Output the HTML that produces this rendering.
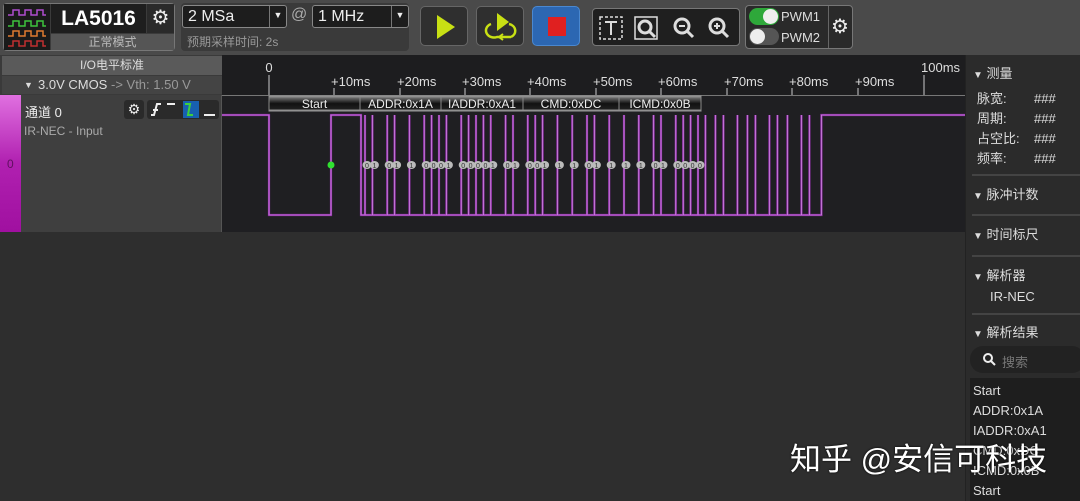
<!DOCTYPE html>
<html><head><meta charset="utf-8"><style>
*{margin:0;padding:0;box-sizing:border-box}
body{width:1080px;height:501px;overflow:hidden;background:#2e2e2e;font-family:"Liberation Sans","Noto Sans CJK SC",sans-serif;position:relative;color:#ddd}
.a{position:absolute}
.tb{left:0;top:0;width:1080px;height:55px;background:#4a4a4a}
.box{border:1px solid #777;border-radius:4px;background:#2c2c2c}
.sel{background:#1d1d1d;border:1px solid #888;border-radius:3px;color:#eee;font-size:16px;padding:1px 5px}
.btn{border:1px solid #666;border-radius:5px;background:#2f2f2f}
.rp{font-size:13px;color:#ddd}
.hd{font-size:13px;color:#ddd}
.sep{height:2px;background:#444}
</style></head><body>
<div class="a tb"></div>
<div class="a box" style="left:3px;top:3px;width:172px;height:48px;background:#3b3b3b"></div>
<div class="a" style="left:4px;top:4px;width:46px;height:46px;background:#1a1a1a">
<svg width="46" height="46"><g fill="none" stroke-width="1.5">
<path d="M4 11h5v-5h6v5h6v-5h6v5h6v-5h6v5h3" stroke="#b04cd0"/>
<path d="M4 22h5v-5h6v5h6v-5h6v5h6v-5h6v5h3" stroke="#3cc43c"/>
<path d="M4 32h5v-5h6v5h6v-5h6v5h6v-5h6v5h3" stroke="#e07a30"/>
<path d="M4 42h5v-5h6v5h6v-5h6v5h6v-5h6v5h3" stroke="#c03030"/></g></svg></div>
<div class="a" style="left:51px;top:4px;width:95px;height:29px;background:#1e1e1e;color:#fff;font-weight:bold;font-size:21px;text-align:center;line-height:29px">LA5016</div>
<div class="a" style="left:147px;top:4px;width:27px;height:29px;background:#2a2a2a;color:#eee;font-size:20px;text-align:center;line-height:29px">⚙</div>
<div class="a" style="left:51px;top:34px;width:123px;height:16px;background:#555;color:#bbb;font-size:12px;text-align:center;line-height:16px">正常模式</div>
<div class="a" style="left:181px;top:3px;width:228px;height:48px;background:#3a3a3a;border-radius:4px"></div>
<div class="a sel" style="left:182px;top:5px;width:105px;height:23px;line-height:19px">2 MSa<span style="position:absolute;right:0;top:0;width:17px;height:21px;border-left:1px solid #777;font-size:9px;text-align:center">▼</span></div>
<div class="a" style="left:291px;top:6px;color:#aaa;font-size:16px">@</div>
<div class="a sel" style="left:312px;top:5px;width:97px;height:23px;line-height:19px">1 MHz<span style="position:absolute;right:0;top:0;width:17px;height:21px;border-left:1px solid #777;font-size:9px;text-align:center">▼</span></div>
<div class="a" style="left:187px;top:33px;color:#999;font-size:12px">预期采样时间: 2s</div>
<div class="a btn" style="left:420px;top:6px;width:48px;height:40px"><svg width="48" height="40"><path d="M16 8L34 20L16 32Z" fill="#c8e014"/></svg></div>
<div class="a btn" style="left:476px;top:6px;width:48px;height:40px"><svg width="48" height="40"><path d="M20 6L32 15L20 24Z" fill="#c8e014"/><path d="M14 17a8 7 0 0 0 6 13h14M34 30a8 7 0 0 0-2-13" fill="none" stroke="#c8e014" stroke-width="2.5"/><path d="M26 27l-4 3 4 3" fill="none" stroke="#c8e014" stroke-width="2"/></svg></div>
<div class="a" style="left:532px;top:6px;width:48px;height:40px;background:#2c67b2;border:1px solid #4a88d0;border-radius:5px"><svg width="48" height="40"><rect x="15" y="10" width="18" height="19" fill="#e02020"/></svg></div>
<div class="a" style="left:592px;top:8px;width:148px;height:38px;background:#1f1f1f;border:1px solid #777;border-radius:4px">
<svg width="148" height="38"><g fill="none" stroke="#ddd" stroke-width="2">
<rect x="7" y="8" width="22" height="22" stroke-dasharray="3 2" stroke-width="1.5"/><path d="M12 13h12M18 13v13"/>
<rect x="42" y="8" width="22" height="22" stroke-width="1.5"/><circle cx="52" cy="18" r="6" stroke-width="3"/><path d="M56 22l6 6" stroke-width="3"/>
<circle cx="89" cy="17" r="7" stroke-width="3"/><path d="M94 22l6 6" stroke-width="3"/><path d="M86 17h6"/>
<circle cx="124" cy="17" r="7" stroke-width="3"/><path d="M129 22l6 6" stroke-width="3"/><path d="M121 17h6M124 14v6"/></g></svg></div>
<div class="a" style="left:745px;top:5px;width:108px;height:44px;background:#2a2a2a;border:1px solid #777;border-radius:4px"></div>
<div class="a" style="left:749px;top:8px;width:30px;height:17px;border-radius:9px;background:#2ea83a"></div>
<div class="a" style="left:763px;top:9px;width:15px;height:15px;border-radius:50%;background:#eee"></div>
<div class="a" style="left:749px;top:28px;width:30px;height:17px;border-radius:9px;background:#555"></div>
<div class="a" style="left:750px;top:29px;width:15px;height:15px;border-radius:50%;background:#eee"></div>
<div class="a" style="left:781px;top:9px;font-size:13px;color:#ddd">PWM1</div>
<div class="a" style="left:781px;top:30px;font-size:13px;color:#ddd">PWM2</div>
<div class="a" style="left:828px;top:6px;width:1px;height:42px;background:#666"></div>
<div class="a" style="left:831px;top:14px;color:#eee;font-size:20px">⚙</div>
<div class="a" style="left:0;top:55px;width:222px;height:40px;background:#3a3a3a"></div>
<div class="a" style="left:2px;top:56px;width:220px;height:19px;background:#5a5a5a;color:#ddd;font-size:12px;text-align:center;line-height:19px">I/O电平标准</div>
<div class="a" style="left:2px;top:76px;width:220px;height:18px;background:#444;font-size:13px;line-height:18px;padding-left:22px;color:#ddd"><span style="font-size:9px;position:absolute;left:22px">▼</span><span style="margin-left:14px">3.0V CMOS</span> <span style="color:#999">-&gt; Vth: 1.50 V</span></div>
<div class="a" style="left:222px;top:55px;width:743px;height:40px;background:#1d1d1f"></div>
<div class="a" style="left:222px;top:95px;width:743px;height:137px;background:#1f1f22"></div>
<svg class="a" style="left:0;top:0" width="1080" height="240" id="wv"></svg>
<div class="a" style="left:0;top:95px;width:222px;height:137px;background:#3f3f3f;border-right:1px solid #555"></div>
<div class="a" style="left:0;top:95px;width:21px;height:137px;background:linear-gradient(#e070e0,#b020b0 50%,#a010a0)"></div>
<div class="a" style="left:7px;top:157px;color:#601060;font-size:12px">0</div>
<div class="a" style="left:25px;top:102px;font-size:13px;color:#eee">通道 0</div>
<div class="a" style="left:24px;top:124px;font-size:12px;color:#aaa">IR-NEC - Input</div>
<div class="a" style="left:124px;top:100px;width:20px;height:19px;background:#2a2a2a;border-radius:3px;color:#eee;font-size:14px;text-align:center;line-height:19px">⚙</div>
<div class="a" style="left:147px;top:100px;width:72px;height:19px;background:#2a2a2a;border-radius:3px"><svg width="72" height="19"><g fill="none" stroke="#eee" stroke-width="2"><path d="M4 15h3l3-11h4M6 10h5"/><path d="M20 4h8"/><rect x="36" y="1" width="16" height="17" fill="#1860b0" stroke="none"/><path d="M38 4h5l-2 11h5" stroke="#3ed03e"/><path d="M57 15h11"/></g></svg></div>
<div class="a" style="left:965px;top:55px;width:115px;height:446px;background:#2b2b2b;border-left:1px solid #222"></div>
<div class="a hd" style="left:973px;top:63px"><span style="font-size:10px">▼</span> 测量</div>
<div class="a rp" style="left:977px;top:89px;line-height:20px">脉宽:<br>周期:<br>占空比:<br>频率:</div>
<div class="a rp" style="left:1034px;top:89px;line-height:20px">###<br>###<br>###<br>###</div>
<div class="a sep" style="left:972px;top:174px;width:108px"></div>
<div class="a hd" style="left:973px;top:184px"><span style="font-size:10px">▼</span> 脉冲计数</div>
<div class="a sep" style="left:972px;top:214px;width:108px"></div>
<div class="a hd" style="left:973px;top:224px"><span style="font-size:10px">▼</span> 时间标尺</div>
<div class="a sep" style="left:972px;top:255px;width:108px"></div>
<div class="a hd" style="left:973px;top:265px"><span style="font-size:10px">▼</span> 解析器</div>
<div class="a rp" style="left:990px;top:289px">IR-NEC</div>
<div class="a sep" style="left:972px;top:313px;width:108px"></div>
<div class="a hd" style="left:973px;top:322px"><span style="font-size:10px">▼</span> 解析结果</div>
<div class="a" style="left:970px;top:346px;width:115px;height:27px;border-radius:13px;background:#222"></div>
<svg class="a" style="left:982px;top:352px" width="14" height="14"><circle cx="6" cy="6" r="4" fill="none" stroke="#eee" stroke-width="2"/><path d="M9 9l4 4" stroke="#eee" stroke-width="2"/></svg>
<div class="a" style="left:1002px;top:352px;font-size:13px;color:#777">搜索</div>
<div class="a" style="left:970px;top:378px;width:110px;height:123px;background:#1e1e1e"></div>
<div class="a" style="left:973px;top:381px;font-size:13px;line-height:20px;color:#ddd">Start<br>ADDR:0x1A<br>IADDR:0xA1<br>CMD:0xDC<br>ICMD:0x0B<br>Start</div>
<div class="a" style="left:790px;top:434px;font-size:31px;color:#fff;text-shadow:0 0 2px #000">知乎 @安信可科技</div>
<script>
var s=document.getElementById('wv'),h='';
var ticks=[[269,'0'],[334,'+10ms'],[400,'+20ms'],[465,'+30ms'],[530,'+40ms'],[596,'+50ms'],[661,'+60ms'],[727,'+70ms'],[792,'+80ms'],[858,'+90ms'],[924,'100ms']];
ticks.forEach(function(t,i){h+='<line x1="'+t[0]+'" y1="'+(i==0||i==10?75:88)+'" x2="'+t[0]+'" y2="95" stroke="#ccc"/>';
h+='<text x="'+(i==0?t[0]:t[0]-3)+'" y="'+(i==0||i==10?72:86)+'" fill="#ddd" font-size="13" text-anchor="'+(i==0?'middle':'start')+'" font-family="Liberation Sans">'+t[1]+'</text>';});
h+='<rect x="269" y="96" width="432" height="15" fill="#2a2a2a" stroke="#999"/>';
[[269,360,'Start'],[360,441,'ADDR:0x1A'],[441,523,'IADDR:0xA1'],[523,619,'CMD:0xDC'],[619,701,'ICMD:0x0B']].forEach(function(a){h+='<rect x="'+a[0]+'" y="97" width="'+(a[1]-a[0])+'" height="13" fill="url(#g)" stroke="#888"/><text x="'+((a[0]+a[1])/2)+'" y="108" fill="#eee" font-size="12" text-anchor="middle" font-family="Liberation Sans">'+a[2]+'</text>';});
var hi=115,lo=215,d='M222 '+hi+'H269V'+lo+'H331V'+hi+'H361',x=361,bits=[],pills='';
[0x1A,0xA1,0xDC,0x0B].forEach(function(b){for(var i=0;i<8;i++)bits.push((b>>i)&1);});
var p0=7.4;
bits.forEach(function(b){d+='V'+lo+'H'+(x+4)+'V'+hi;var w=b?p0*2:p0;pills+='<ellipse cx="'+(x+6)+'" cy="165" rx="4.5" ry="4" fill="#bbb"/><text x="'+(x+6)+'" y="168" font-size="7" text-anchor="middle" fill="#333">'+b+'</text>';x+=w;});
var steps=[10,8,14,10,8,14,8,10,14,8,12];
for(var k=0;k<steps.length&&x<818;k++){d+='V'+lo+'H'+(x+4)+'V'+hi;x+=steps[k];}
d+='V'+lo+'H'+(x+4)+'V'+hi+'H965';
h+='<path d="'+d+'" fill="none" stroke="#9030a8" stroke-width="2.2"/><path d="'+d+'" fill="none" stroke="#e0a0f0" stroke-width="0.6"/>';
h+='<circle cx="331" cy="165" r="3.5" fill="#30e030"/>'+pills;
s.innerHTML='<defs><linearGradient id="g" x1="0" y1="0" x2="0" y2="1"><stop offset="0" stop-color="#777"/><stop offset="0.5" stop-color="#111"/><stop offset="1" stop-color="#222"/></linearGradient></defs><path d="M222 95.5H965" stroke="#777"/>'+h;
</script>
</body></html>
